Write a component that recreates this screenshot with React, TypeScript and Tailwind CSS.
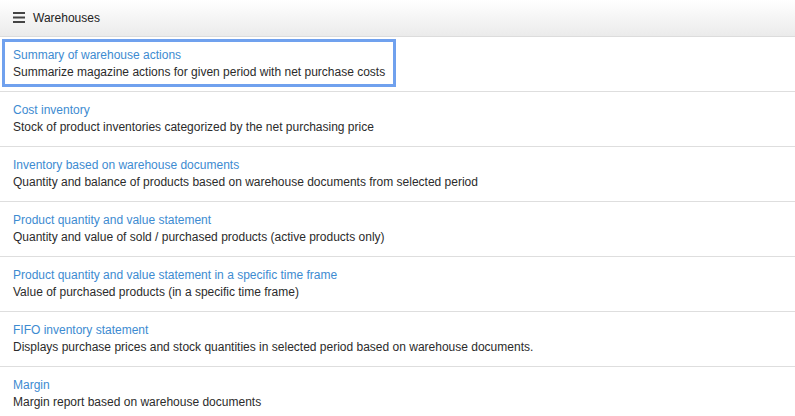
const reports = [
  {
    title: "Summary of warehouse actions",
    description: "Summarize magazine actions for given period with net purchase costs",
  },
  {
    title: "Cost inventory",
    description: "Stock of product inventories categorized by the net purchasing price",
  },
  {
    title: "Inventory based on warehouse documents",
    description: "Quantity and balance of products based on warehouse documents from selected period",
  },
  {
    title: "Product quantity and value statement",
    description: "Quantity and value of sold / purchased products (active products only)",
  },
  {
    title: "Product quantity and value statement in a specific time frame",
    description: "Value of purchased products (in a specific time frame)",
  },
  {
    title: "FIFO inventory statement",
    description: "Displays purchase prices and stock quantities in selected period based on warehouse documents.",
  },
  {
    title: "Margin",
    description: "Margin report based on warehouse documents",
  },
];

export default function App() {
  return (
    <div className="w-[795px] h-[416px] overflow-hidden bg-white text-[12px] leading-[17px] text-[#333] font-['Liberation_Sans',Arial,sans-serif]">
      <div className="h-[37px] flex items-center gap-[8px] pl-[13px] border-b border-[#dcdcdc] bg-gradient-to-b from-white to-[#ebebeb]">
        <svg width="12" height="11" viewBox="0 0 12 11" className="mt-[-1px]">
          <rect x="0" y="0" width="12" height="2" fill="#444" />
          <rect x="0" y="4.5" width="12" height="2" fill="#444" />
          <rect x="0" y="9" width="12" height="2" fill="#444" />
        </svg>
        <span className="text-[#222]">Warehouses</span>
      </div>
      <ul>
        {reports.map((r, i) => (
          <li key={r.title} className="h-[55px] border-b border-[#dedede] pt-[5px] pl-[5px]">
            <a
              href="#"
              className={`inline-block px-[8px] pt-[5px] pb-[3px] ${
                i === 0 ? "outline-3 outline-solid outline-[#70a1ee]" : ""
              }`}
            >
              <div className="text-[#3d8bd1]">{r.title}</div>
              <div className="text-[#2b2b2b]">{r.description}</div>
            </a>
          </li>
        ))}
      </ul>
    </div>
  );
}
